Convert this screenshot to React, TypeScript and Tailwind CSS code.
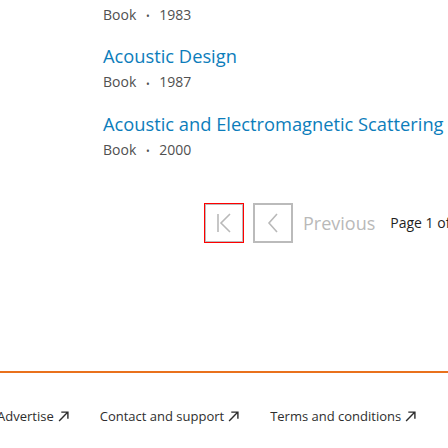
const items = [
  { title: "Acoustic Design", year: "1987" },
  { title: "Acoustic and Electromagnetic Scattering", year: "2000" },
];

function Meta({ year }: { year: string }) {
  return (
    <p className="text-sm leading-5 text-[#505050]">
      Book <span className="mx-1.5 text-[10px] align-middle">•</span> {year}
    </p>
  );
}

function FirstIcon() {
  return (
    <svg width="16" height="20" viewBox="0 0 16 20" fill="none" stroke="#b9b9b9" strokeWidth="1.6">
      <path d="M2 1v18M14 1 5 10l9 9" />
    </svg>
  );
}

function PrevIcon() {
  return (
    <svg width="12" height="20" viewBox="0 0 12 20" fill="none" stroke="#b9b9b9" strokeWidth="1.6">
      <path d="M10 1 2 10l8 9" />
    </svg>
  );
}

export default function App() {
  return (
    <div className="w-[448px] h-[448px] overflow-hidden bg-white font-['Open_Sans',sans-serif]">
      <div className="pl-[103px] pt-[5px]">
        <Meta year="1983" />
        {items.map((item) => (
          <div key={item.title} className="mt-[18px]">
            <a href="#" className="block text-[18.3px] leading-6 text-[#0c7dbb] whitespace-nowrap">
              {item.title}
            </a>
            <div className="mt-1">
              <Meta year={item.year} />
            </div>
          </div>
        ))}
      </div>

      <div className="flex items-center mt-[42px] pl-[204px] whitespace-nowrap">
        <button className="shrink-0 w-10 h-10 flex items-center justify-center border-2 border-[#bbbbbb] outline outline-1 outline-[#ff0000] -outline-offset-1">
          <FirstIcon />
        </button>
        <button className="shrink-0 ml-[9px] w-10 h-10 flex items-center justify-center border-2 border-[#bbbbbb]">
          <PrevIcon />
        </button>
        <span className="shrink-0 ml-[10px] text-lg text-[#b9b9b9]">Previous</span>
        <span className="shrink-0 ml-[15px] text-sm text-[#1f1f1f]">Page 1 of 1</span>
      </div>

      <div className="mt-[128px] h-[2px] bg-[#e9711c]" />

      <div className="flex gap-[31px] mt-[34px] -ml-[3px] text-[13px] text-[#2e2e2e] whitespace-nowrap">
        {["Advertise", "Contact and support", "Terms and conditions", "Privacy policy"].map((l) => (
          <a key={l} href="#" className="shrink-0 flex items-center gap-1">
            {l}
            <svg width="11" height="11" viewBox="0 0 10 10" fill="none" stroke="#2e2e2e" strokeWidth="1.3">
              <path d="M1 9 9 1M3 1h6v6" />
            </svg>
          </a>
        ))}
      </div>
    </div>
  );
}
